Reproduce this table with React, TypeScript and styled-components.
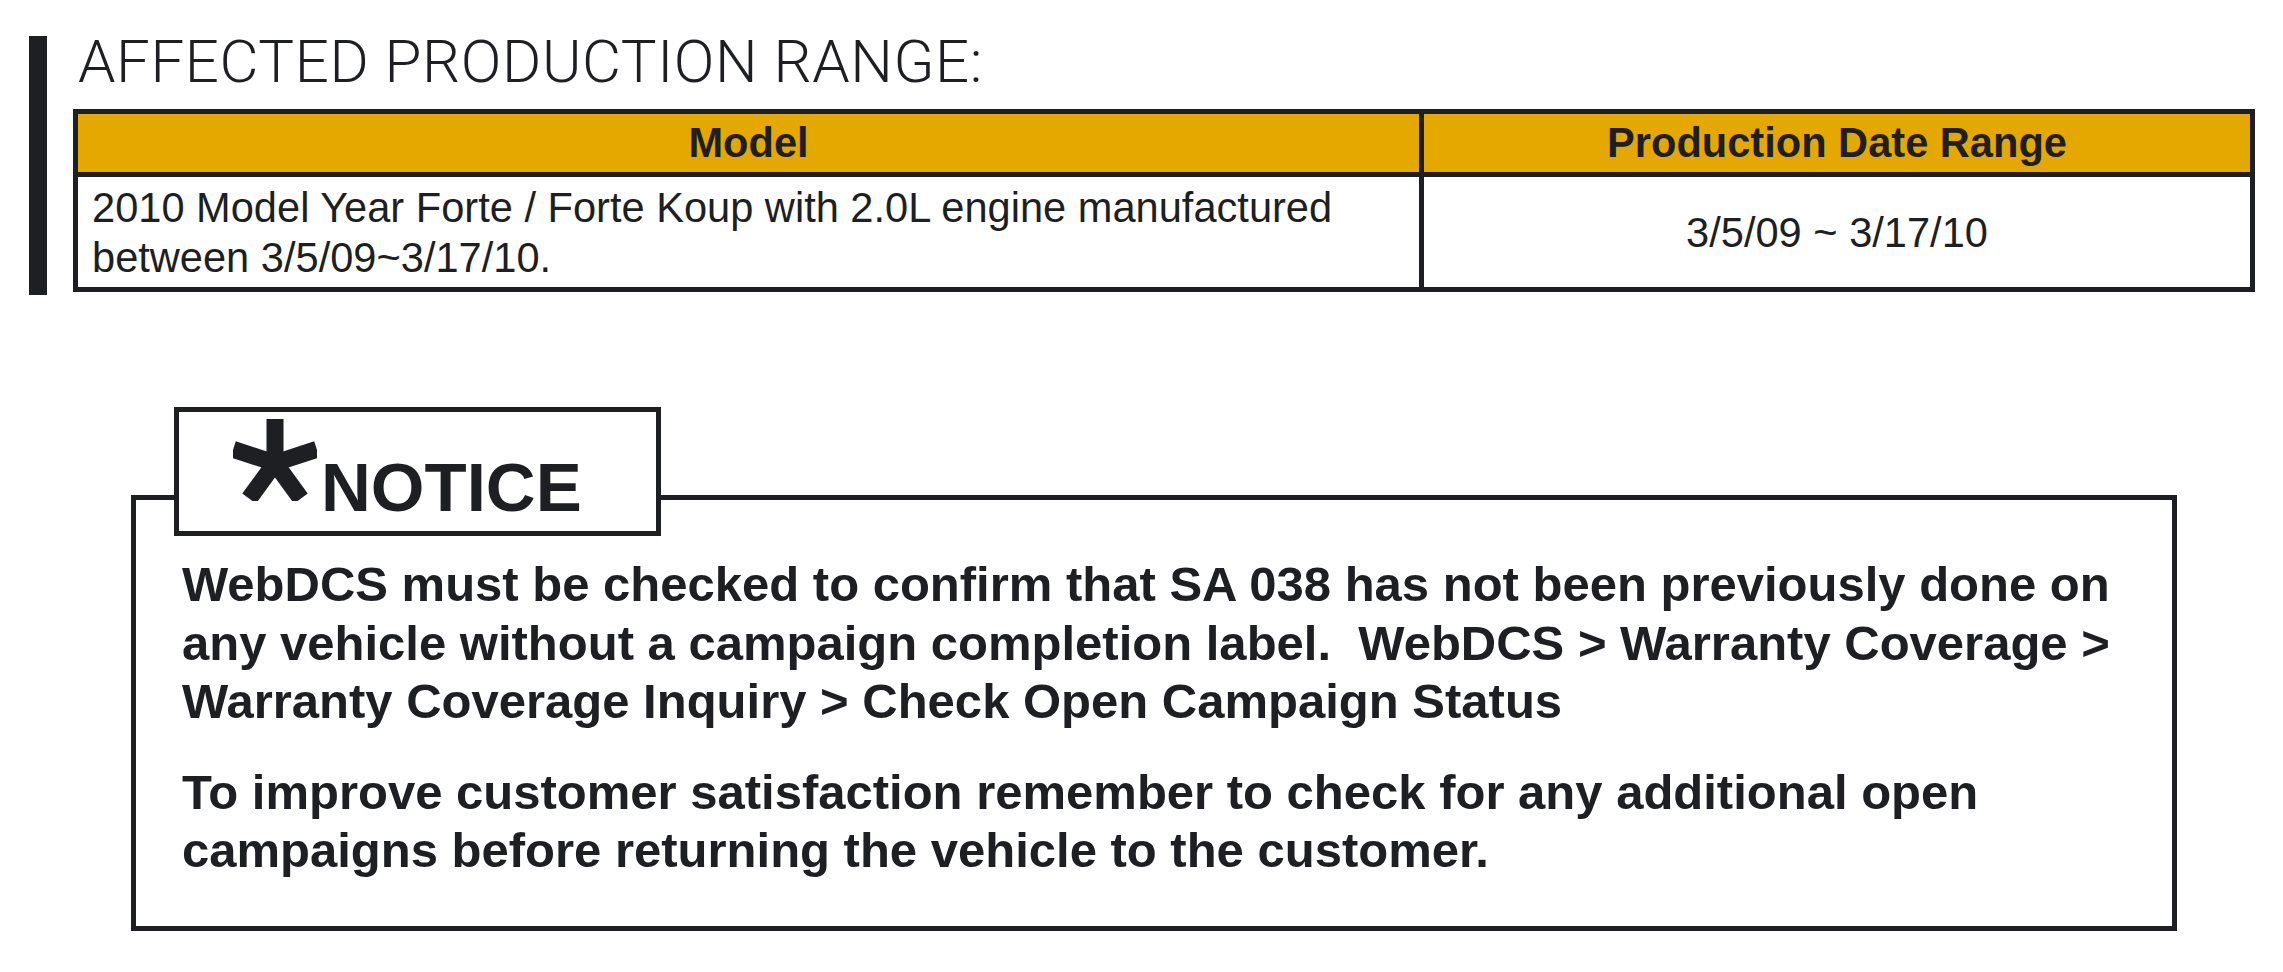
import styled, { createGlobalStyle } from "styled-components";

const ink = "#1d1f23";
const gold = "#e4a800";

const GlobalStyle = createGlobalStyle`
  html, body {
    margin: 0;
    padding: 0;
    background: #fff;
  }
  body {
    font-family: "Liberation Sans", Arial, sans-serif;
    color: ${ink};
  }
`;

const Page = styled.div`
  width: 2283px;
  height: 972px;
  box-sizing: border-box;
  padding: 36px 28px 0 29px;
  overflow: hidden;
`;

const RangeSection = styled.section`
  border-left: 18px solid ${ink};
  padding: 0 0 3px 26px;
`;

const Heading = styled.h2`
  margin: 0 0 21px 5px;
  font-family: Roboto, "Open Sans", sans-serif;
  font-weight: 300;
  font-size: 60px;
  line-height: 52px;
  letter-spacing: 0.6px;
  color: ${ink};
`;

const Table = styled.table`
  width: 100%;
  border-collapse: collapse;
  border: 5px solid ${ink};
  table-layout: fixed;
`;

const HeadCell = styled.th<{ $w?: string }>`
  width: ${(p) => p.$w || "auto"};
  height: 58px;
  padding: 0;
  background: ${gold};
  border: 5px solid ${ink};
  border-right-width: 4px;
  font-size: 41.6px;
  font-weight: 700;
  text-align: center;
  vertical-align: middle;
`;

const Cell = styled.td<{ $center?: boolean }>`
  height: 108px;
  padding: 2px 14px 0 14px;
  border: 5px solid ${ink};
  border-right-width: 4px;
  font-size: 41.6px;
  line-height: 50px;
  text-align: ${(p) => (p.$center ? "center" : "left")};
  vertical-align: middle;
`;

const NoticeFrame = styled.div`
  margin: 200px 78px 0 102px;
  border: 5px solid ${ink};
  padding: 0 40px 46px 0;
`;

const Label = styled.div`
  display: flex;
  align-items: flex-start;
  box-sizing: border-box;
  width: 487px;
  height: 129px;
  margin: -93px 0 0 38px;
  padding-left: 54px;
  border: 5px solid ${ink};
  background: #fff;
`;

const Star = styled.svg`
  flex: none;
  margin-top: 7px;
`;

const LabelText = styled.span`
  margin: 41px 0 0 4px;
  font-size: 69px;
  line-height: 69px;
  font-weight: 700;
`;

const NoticeBody = styled.div`
  padding: 19px 0 0 46px;
`;

const Para = styled.p<{ $gap?: boolean }>`
  margin: ${(p) => (p.$gap ? "32px" : "0")} 0 0 0;
  font-size: 49px;
  line-height: 58.5px;
  font-weight: 700;
  white-space: pre;
`;

function Asterisk() {
  return (
    <Star width="84" height="82" viewBox="-42 -44 84 82">
      <g fill={ink}>
        {[0, 72, 144, 216, 288].map((a) => (
          <rect key={a} x="-8.5" y="-44" width="17" height="44" transform={`rotate(${a})`} />
        ))}
        <circle r="11" />
      </g>
    </Star>
  );
}

export default function App() {
  return (
    <>
      <GlobalStyle />
      <Page>
        <RangeSection>
          <Heading>AFFECTED PRODUCTION RANGE:</Heading>
          <Table>
            <thead>
              <tr>
                <HeadCell $w="61.6%">Model</HeadCell>
                <HeadCell>Production Date Range</HeadCell>
              </tr>
            </thead>
            <tbody>
              <tr>
                <Cell>
                  2010 Model Year Forte / Forte Koup with 2.0L engine manufactured
                  <br />
                  between 3/5/09~3/17/10.
                </Cell>
                <Cell $center>3/5/09 ~ 3/17/10</Cell>
              </tr>
            </tbody>
          </Table>
        </RangeSection>

        <NoticeFrame>
          <Label>
            <Asterisk />
            <LabelText>NOTICE</LabelText>
          </Label>
          <NoticeBody>
            <Para>
              {"WebDCS must be checked to confirm that SA 038 has not been previously done on\n"}
              {"any vehicle without a campaign completion label.  WebDCS > Warranty Coverage >\n"}
              {"Warranty Coverage Inquiry > Check Open Campaign Status"}
            </Para>
            <Para $gap>
              {"To improve customer satisfaction remember to check for any additional open\n"}
              {"campaigns before returning the vehicle to the customer."}
            </Para>
          </NoticeBody>
        </NoticeFrame>
      </Page>
    </>
  );
}
